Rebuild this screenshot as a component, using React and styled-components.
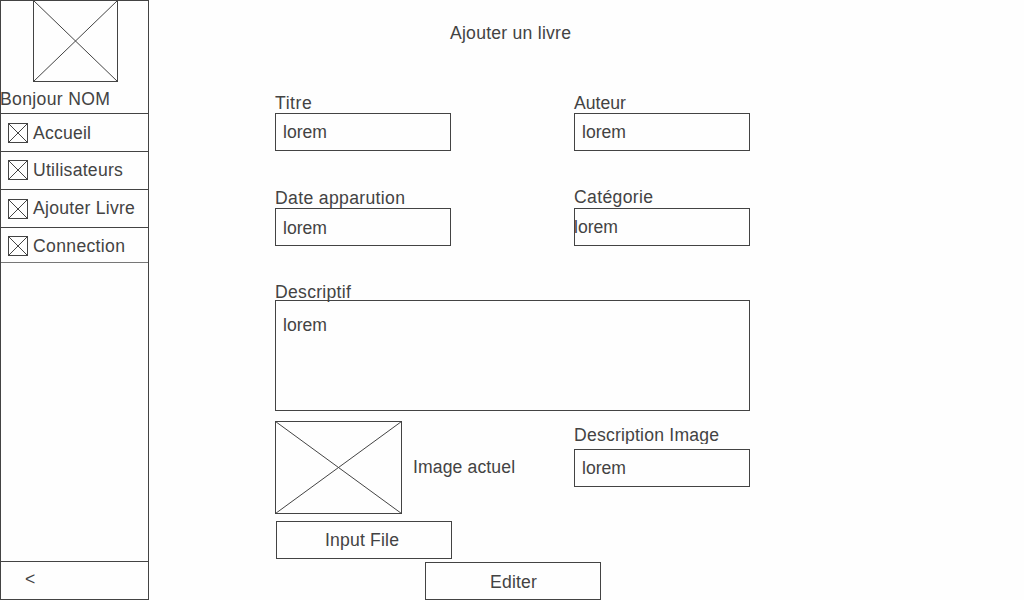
import React from "react";
import styled, { createGlobalStyle } from "styled-components";

const ink = "#434343";

const GlobalStyle = createGlobalStyle`
  * { box-sizing: border-box; }
  body {
    margin: 0;
    background: #fefefe;
    color: ${ink};
    font: 17.6px/20px "Liberation Sans", Arial, sans-serif;
    overflow: hidden;
  }
`;

const Page = styled.div`
  display: flex;
  width: 1024px;
  height: 600px;
`;

const Text = styled.span`
  letter-spacing: ${(p) => p.$track ?? 0}px;
  white-space: nowrap;
`;

const Sidebar = styled.aside`
  display: flex;
  flex-direction: column;
  width: 149px;
  height: 600px;
  border: 1px solid ${ink};
`;

const Profile = styled.div`
  height: 113px;
  margin-top: -1px;
  flex: none;
`;

const Greeting = styled.div`
  margin: 7px 0 0 -1px;
`;

const NavItem = styled.a`
  display: flex;
  align-items: flex-start;
  flex: none;
  height: ${(p) => p.$height}px;
  padding-left: 7px;
  border-top: 1px solid ${ink};
`;

const NavText = styled(Text)`
  margin: ${(p) => p.$top}px 0 0 5px;
`;

const SidebarBody = styled.div`
  flex: 1;
  border-top: 1px solid #777;
`;

const Collapse = styled.div`
  flex: none;
  height: 38px;
  padding: 7px 0 0 24px;
  border-top: 1px solid ${ink};
`;

const Cross = styled.svg`
  display: block;
  flex: none;
  margin: ${(p) => p.$margin || 0};
  fill: none;
  stroke: ${ink};
  stroke-width: 1;
`;

const Main = styled.main`
  width: 475px;
  margin-left: 126px;
`;

const Title = styled.h1`
  margin: 0;
  height: 93px;
  padding: 23px 0 0 175px;
  font: inherit;
`;

const FieldRow = styled.div`
  display: flex;
  justify-content: space-between;
  height: ${(p) => p.$height}px;
`;

const Field = styled.label`
  display: flex;
  flex-direction: column;
  width: ${(p) => (p.$wide ? 475 : 176)}px;
  padding-top: ${(p) => p.$top || 0}px;
`;

const Label = styled(Text)`
  height: ${(p) => p.$height}px;
`;

const ClippedText = styled.span`
  display: block;
  height: 19px;
  overflow: hidden;
`;

const Box = styled.span`
  display: block;
  height: ${(p) => p.$height || 38}px;
  padding: ${(p) => p.$top || 8}px 0 0 ${(p) => (p.$flush ? 0 : 7)}px;
  border: 1px solid ${ink};
`;

const FlushText = styled.span`
  display: block;
  margin-left: -1px;
`;

const ImageRow = styled.div`
  display: flex;
  justify-content: space-between;
  height: 110px;
`;

const CurrentImage = styled.div`
  display: flex;
`;

const Caption = styled(Text)`
  margin: 36px 0 0 11px;
`;

const Button = styled.button`
  display: block;
  width: 176px;
  height: 38px;
  margin: ${(p) => p.$margin};
  padding: ${(p) => p.$pad};
  border: 1px solid ${ink};
  background: none;
  color: inherit;
  font: inherit;
  text-align: left;
`;

function Placeholder({ w, h, margin }) {
  return (
    <Cross width={w} height={h} viewBox={`0 0 ${w} ${h}`} $margin={margin}>
      <rect x="0.5" y="0.5" width={w - 1} height={h - 1} />
      <path d={`M.5 .5L${w - 0.5} ${h - 0.5}M${w - 0.5} .5L.5 ${h - 0.5}`} />
    </Cross>
  );
}

const nav = [
  { text: "Accueil", height: 38, icon: 9, top: 9, track: 0.2 },
  { text: "Utilisateurs", height: 38, icon: 8, top: 8, track: 0.26 },
  { text: "Ajouter Livre", height: 38, icon: 9, top: 8, track: 0.26 },
  { text: "Connection", height: 35, icon: 8, top: 8, track: 0.33 },
];

export default function App() {
  return (
    <Page>
      <GlobalStyle />
      <Sidebar>
        <Profile>
          <Placeholder w={85} h={82} margin="0 0 0 32px" />
          <Greeting>
            <Text $track={0.33}>Bonjour NOM</Text>
          </Greeting>
        </Profile>
        {nav.map((n) => (
          <NavItem key={n.text} $height={n.height}>
            <Placeholder w={20} h={20} margin={`${n.icon}px 0 0`} />
            <NavText $top={n.top} $track={n.track}>{n.text}</NavText>
          </NavItem>
        ))}
        <SidebarBody />
        <Collapse>&lt;</Collapse>
      </Sidebar>
      <Main>
        <Title>
          <Text $track={0.24}>Ajouter un livre</Text>
        </Title>
        <FieldRow $height={94}>
          <Field>
            <Label $height={20} $track={0.55}>Titre</Label>
            <Box><Text>lorem</Text></Box>
          </Field>
          <Field>
            <Label $height={20}>Auteur</Label>
            <Box><Text>lorem</Text></Box>
          </Field>
        </FieldRow>
        <FieldRow $height={95}>
          <Field $top={1}>
            <Label $height={20} $track={0.34}>Date apparution</Label>
            <Box $top={9}><Text>lorem</Text></Box>
          </Field>
          <Field>
            <Label $height={21} $track={0.34}>Catégorie</Label>
            <Box $flush>
              <FlushText><Text>lorem</Text></FlushText>
            </Box>
          </Field>
        </FieldRow>
        <FieldRow $height={139}>
          <Field $wide>
            <Label $height={18} $track={0.28}>Descriptif</Label>
            <Box $height={111} $top={14}><Text>lorem</Text></Box>
          </Field>
        </FieldRow>
        <ImageRow>
          <CurrentImage>
            <Placeholder w={127} h={93} />
            <Caption $track={0.12}>Image actuel</Caption>
          </CurrentImage>
          <Field $top={4}>
            <Label $height={24} $track={0.2}>
              <ClippedText>Description Image</ClippedText>
            </Label>
            <Box><Text>lorem</Text></Box>
          </Field>
        </ImageRow>
        <Button $margin="-10px 0 0 1px" $pad="8px 0 8px 48px">
          <Text $track={0.18}>Input File</Text>
        </Button>
        <Button $margin="3px 0 0 150px" $pad="9px 0 7px 64px">
          <Text $track={0.18}>Editer</Text>
        </Button>
      </Main>
    </Page>
  );
}
